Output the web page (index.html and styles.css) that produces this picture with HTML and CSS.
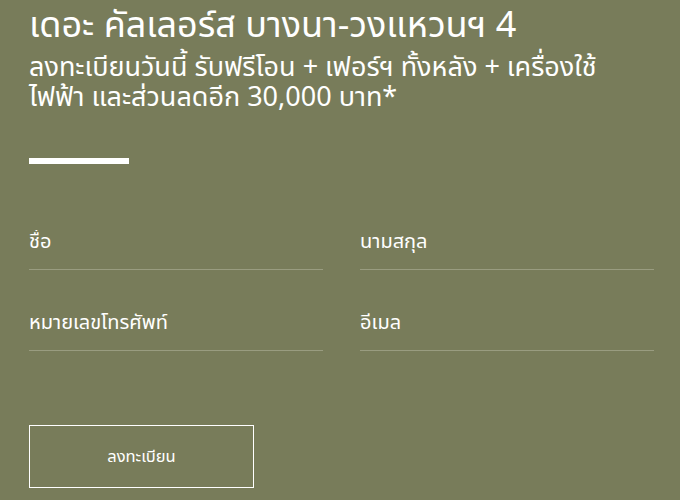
FILE: index.html
```html
<!DOCTYPE html>
<html lang="th">

<head>
    <meta charset="UTF-8">
    <meta name="viewport" content="width=device-width, initial-scale=1.0">
    <title>The Colors Bangna</title>
    <link rel="stylesheet" href="styles.css">
</head>

<body>

    <div class="register-box">
        <h1 class="title">เดอะ คัลเลอร์ส บางนา-วงแหวนฯ 4</h1>
        <p class="promo">ลงทะเบียนวันนี้ รับฟรีโอน + เฟอร์ฯ ทั้งหลัง + เครื่องใช้<br>ไฟฟ้า และส่วนลดอีก 30,000 บาท*</p>
        <div class="divider"></div>

        <form action="" class="reg-form">
            <div class="field">
                <input type="text" placeholder="ชื่อ" name="firstname">
            </div>
            <div class="field">
                <input type="text" placeholder="นามสกุล" name="lastname">
            </div>
            <div class="field">
                <input type="tel" placeholder="หมายเลขโทรศัพท์" name="phone">
            </div>
            <div class="field">
                <input type="email" placeholder="อีเมล" name="email">
            </div>
        </form>

        <button type="button" class="submit-btn">ลงทะเบียน</button>
    </div><!--register-box end-->

</body>

</html>
```

FILE: styles.css
```css
body {
    margin: 0;
    background-color: #787c5a;
    font-family: 'Noto Sans Thai', 'Noto Sans', sans-serif;
    color: #fff;
}

.register-box {
    width: 625px;
    padding: 4px 0 0 29px;
}

.title {
    margin: 0;
    font-size: 36px;
    font-weight: 400;
    line-height: 44px;
}

.promo {
    margin: 5px 0 0 0;
    font-size: 27px;
    line-height: 30px;
}

.divider {
    width: 100px;
    height: 6px;
    margin-top: 45px;
    background-color: #fff;
}

.reg-form {
    display: grid;
    grid-template-columns: 1fr 1fr;
    column-gap: 37px;
    row-gap: 41px;
    margin-top: 66px;
}

.field input {
    display: block;
    width: 100%;
    box-sizing: border-box;
    padding: 0 0 15px 0;
    border: none;
    border-bottom: 1px solid #999c80;
    background: transparent;
    font-family: inherit;
    font-size: 20px;
    line-height: 24px;
    color: #fff;
    outline: none;
}

.field input::placeholder {
    color: #fff;
    opacity: 1;
}

.submit-btn {
    display: block;
    width: 225px;
    height: 63px;
    margin-top: 74px;
    padding: 0;
    border: 1px solid #fff;
    background: transparent;
    font-family: inherit;
    font-size: 16.5px;
    color: #fff;
    cursor: pointer;
}
```
